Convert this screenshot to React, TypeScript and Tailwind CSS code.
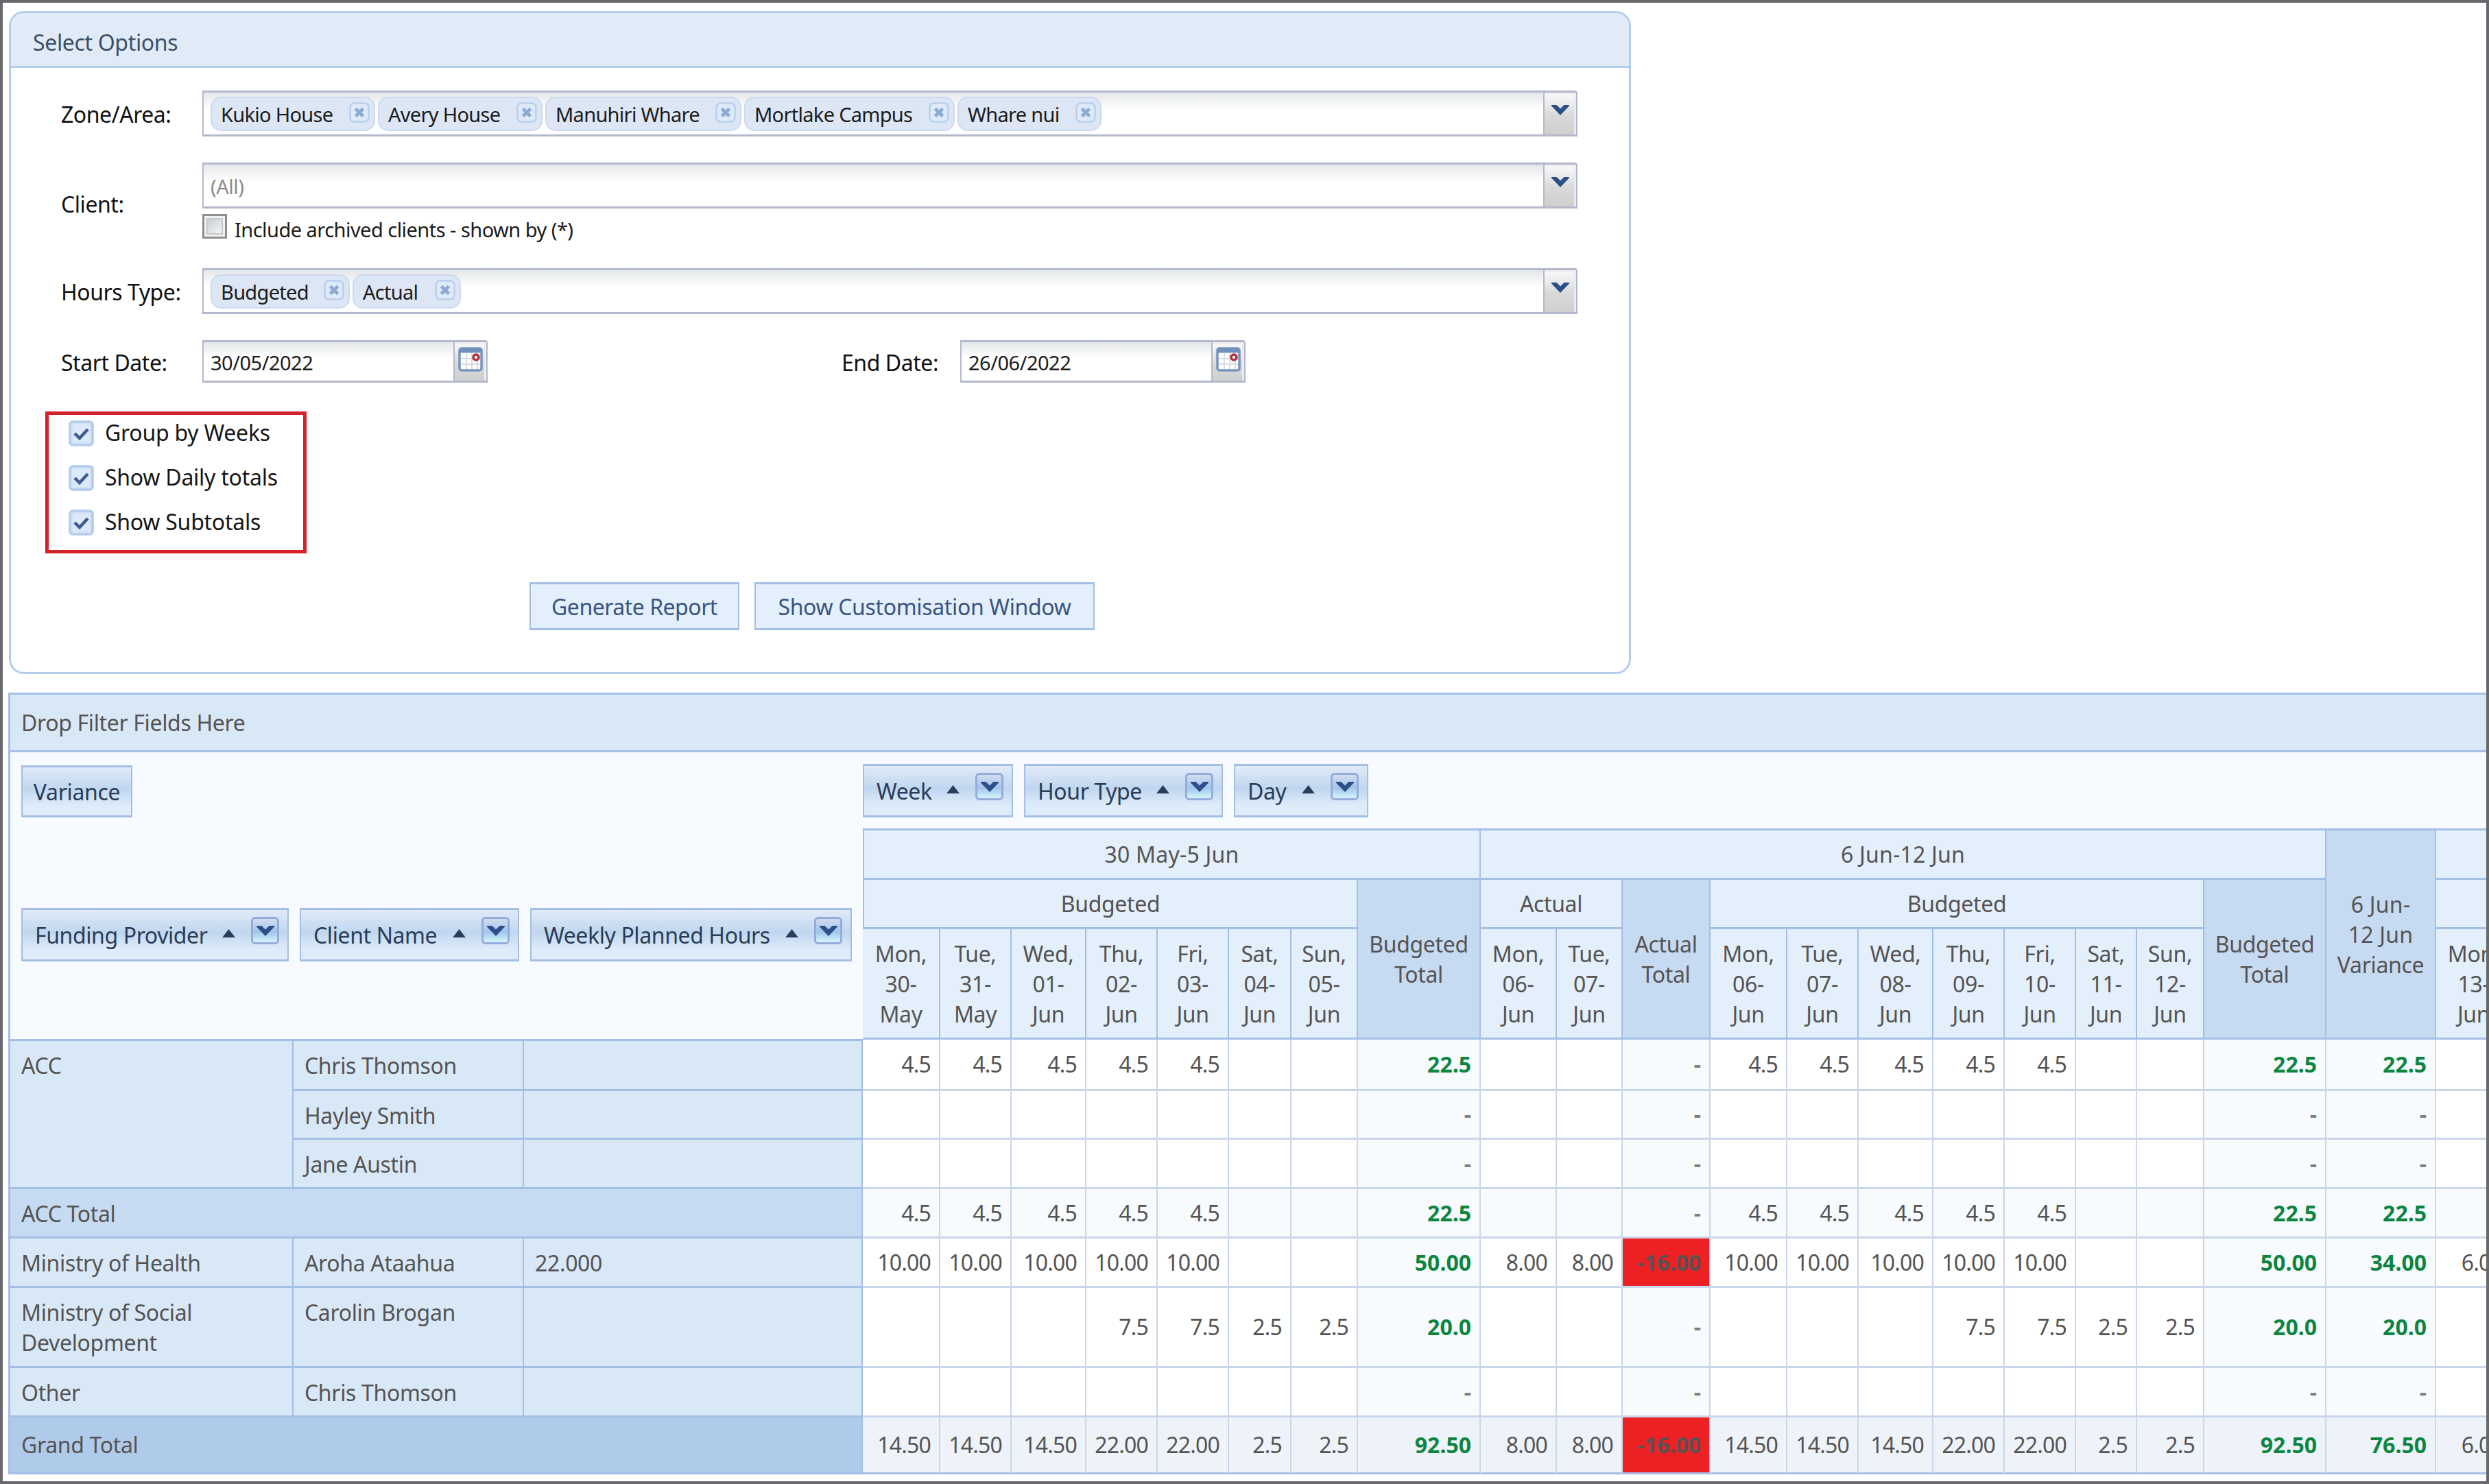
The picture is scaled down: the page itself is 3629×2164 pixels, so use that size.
import React from 'react'
import clsx from 'clsx'

type Field = { label: string; width: string }

const zones = [
  { label: 'Kukio House', width: 'w-[240px]' },
  { label: 'Avery House', width: 'w-[240px]' },
  { label: 'Manuhiri Whare', width: 'w-[286px]' },
  { label: 'Mortlake Campus', width: 'w-[307px]' },
  { label: 'Whare nui', width: 'w-[210px]' },
]

const hourTypes = [
  { label: 'Budgeted', width: 'w-[203px]' },
  { label: 'Actual', width: 'w-[158px]' },
]

const columnFields = [
  { label: 'Week', width: 'w-[219px]' },
  { label: 'Hour Type', width: 'w-[290px]' },
  { label: 'Day', width: 'w-[196px]' },
]

const rowFields = [
  { label: 'Funding Provider', width: 'w-[390px]' },
  { label: 'Client Name', width: 'w-[320px]' },
  { label: 'Weekly Planned Hours', width: 'w-[469px]' },
]

const week1 = ['Mon, 30- May', 'Tue, 31- May', 'Wed, 01- Jun', 'Thu, 02- Jun', 'Fri, 03- Jun', 'Sat, 04- Jun', 'Sun, 05- Jun']
const week2Actual = ['Mon, 06- Jun', 'Tue, 07- Jun']
const week2 = ['Mon, 06- Jun', 'Tue, 07- Jun', 'Wed, 08- Jun', 'Thu, 09- Jun', 'Fri, 10- Jun', 'Sat, 11- Jun', 'Sun, 12- Jun']

// Columns that hold a total or a variance
const totals = [7, 10, 18, 19]

const none = ['', '', '', '', '', '', '', '-', '', '', '-', '', '', '', '', '', '', '', '-', '-', '']
const acc = ['4.5', '4.5', '4.5', '4.5', '4.5', '', '', '22.5', '', '', '-', '4.5', '4.5', '4.5', '4.5', '4.5', '', '', '22.5', '22.5', '']

const rows = [
  { kind: 'client', cells: acc },
  { kind: 'client', cells: none },
  { kind: 'client', cells: none },
  { kind: 'total', cells: acc },
  {
    kind: 'client',
    cells: ['10.00', '10.00', '10.00', '10.00', '10.00', '', '', '50.00', '8.00', '8.00', '-16.00', '10.00', '10.00', '10.00', '10.00', '10.00', '', '', '50.00', '34.00', '6.00'],
  },
  {
    kind: 'client',
    cells: ['', '', '', '7.5', '7.5', '2.5', '2.5', '20.0', '', '', '-', '', '', '', '7.5', '7.5', '2.5', '2.5', '20.0', '20.0', ''],
  },
  { kind: 'client', cells: none },
  {
    kind: 'grand',
    cells: ['14.50', '14.50', '14.50', '22.00', '22.00', '2.5', '2.5', '92.50', '8.00', '8.00', '-16.00', '14.50', '14.50', '14.50', '22.00', '22.00', '2.5', '2.5', '92.50', '76.50', '6.00'],
  },
]

const columns =
  'grid-cols-[113px_104px_109px_104px_104px_91px_97px_179px_111px_96px_128px_112px_104px_109px_104px_104px_89px_98px_178px_160px_111px]'

function Tag({ label, width }: Field) {
  return (
    <div
      className={clsx(
        'flex h-[50px] shrink-0 items-center justify-between rounded-[15px] border-2 border-[#ccd9f0] bg-[#dde6f5] pr-[6px] pl-[13px]',
        width
      )}
    >
      <span className="pt-[2px] text-[29px] leading-[40px] tracking-[-0.7px] whitespace-nowrap text-[#1b1b1b]">{label}</span>
      <svg viewBox="0 0 30 30" className="mb-[3px] size-[30px] shrink-0">
        <rect x="1.5" y="1.5" width="27" height="27" rx="6" fill="#dfeaf8" stroke="#b9cfee" strokeWidth="2.5" />
        <path d="M9.5 9.5l11 11M20.5 9.5l-11 11" stroke="#8eaad3" strokeWidth="5" />
      </svg>
    </div>
  )
}

function Chevron() {
  return (
    <svg viewBox="0 0 26 15" className="h-[15px] w-[26px] shrink-0">
      <path d="M0 0h7.5L13 5.5 18.5 0H26v1.5L13 15 0 1.5z" fill="#2d4f88" />
    </svg>
  )
}

function CalendarIcon() {
  return (
    <svg viewBox="0 0 36 36" className="size-9">
      <rect x="2" y="2" width="32" height="32" rx="3" fill="#fff" stroke="#7495c0" strokeWidth="3.5" />
      <path d="M2 5.5h32" stroke="#7090bd" strokeWidth="6" />
      <path d="M12 9v23M20 9v23M28 9v23M4 17h28M4 25h28" stroke="#d9dde3" strokeWidth="2" />
      <circle cx="26" cy="15" r="4" fill="#fff" stroke="#b5303a" strokeWidth="3.5" />
    </svg>
  )
}

function Editor({ className, icon, children }: { className: string; icon: React.ReactNode; children?: React.ReactNode }) {
  return (
    <div
      className={clsx(
        'flex rounded-tr-[4px] border-x-2 border-y-[3px] border-[#b4b8cc] bg-linear-to-b from-[#e4e7e9] via-white via-40% to-white',
        className
      )}
    >
      <div className="flex flex-1 items-center gap-[4px] pl-[10px]">{children}</div>
      <div className="flex w-[48px] justify-center border-l-2 border-[#b4b8cc] bg-linear-to-b from-[#f5f5f5] from-10% via-[#d9d9d9] via-55% to-[#cfcfcf] shadow-[inset_-3px_2px_0_#ececec]">
        {icon}
      </div>
    </div>
  )
}

function ComboBox({ children }: { children: React.ReactNode }) {
  return (
    <Editor
      className="h-[67px] w-[2005px]"
      icon={
        <span className="flex pt-[18px]">
          <Chevron />
        </span>
      }
    >
      {children}
    </Editor>
  )
}

function DateEdit({ value }: { value: string }) {
  return (
    <Editor
      className="h-[62px] w-[416px]"
      icon={
        <span className="pt-[7px]">
          <CalendarIcon />
        </span>
      }
    >
      <span className="pt-[4px] text-[29px] tracking-[-0.5px] text-[#1b1b1b]">{value}</span>
    </Editor>
  )
}

function CheckOption({ label }: { label: string }) {
  return (
    <div className="flex h-[65px] items-start gap-[16px]">
      <svg viewBox="0 0 37 38" className="mt-[8px] h-[38px] w-[37px]">
        <rect x="2" y="2" width="33" height="34" rx="4" fill="#d3e3f6" stroke="#b4ccec" strokeWidth="3.5" />
        <rect x="6" y="6" width="25" height="26" fill="#dbe9f9" />
        <path d="M9 19l7 7 12-13" fill="none" stroke="#3c5c92" strokeWidth="4.5" />
      </svg>
      <span className="mt-[4px] tracking-[-0.25px] text-[#161616]">{label}</span>
    </div>
  )
}

function OptionLabel({ children }: { children: React.ReactNode }) {
  return <div className="w-[206px] shrink-0 pt-[4px] tracking-[-0.45px] text-[#111]">{children}</div>
}

function FieldHeader({ label, width }: Field) {
  return (
    <div
      className={clsx(
        'flex h-[78px] shrink-0 items-center border-x-2 border-y-[3px] border-[#a3bfe6] bg-linear-to-b from-[#e1ebf8] via-[#c0d6ef] via-45% to-[#deecfa] to-80% pr-[12px] pl-[18px] text-[#293c57]',
        width
      )}
    >
      <span className="pt-[2px] tracking-[-0.4px] whitespace-nowrap">{label}</span>
      <svg viewBox="0 0 22 14" className="mr-[22px] mb-[5px] ml-auto h-[12px] w-[21px]">
        <path d="M11 0l11 14H0z" fill="#293c5c" />
      </svg>
      <div className="mb-[12px] flex h-10 w-[41px] items-center justify-center rounded-[6px] border-[3px] border-[#97abdb] bg-linear-to-b from-[#d2dcf1] via-[#a0c5ea] via-55% to-[#d6f6ff]">
        <Chevron />
      </div>
    </div>
  )
}

function HeaderCell({ className, children }: { className?: string; children?: React.ReactNode }) {
  return (
    <div
      className={clsx(
        'flex items-center justify-center border-r-2 border-b-[3px] border-[#a3bfe6] px-[6px] pt-[2px] text-center',
        className ?? 'bg-[#e3effb]'
      )}
    >
      <div>{children}</div>
    </div>
  )
}

function DayCells({ days }: { days: string[] }) {
  return (
    <>
      {days.map((day) => (
        <HeaderCell key={day}>
          <span className="flex flex-col">
            {day.split(' ').map((part) => (
              <span key={part}>{part}</span>
            ))}
          </span>
        </HeaderCell>
      ))}
    </>
  )
}

function RowHeader({ className, children }: { className?: string; children?: React.ReactNode }) {
  return (
    <div className={clsx('border-r-2 border-b-[3px] border-[#a3bfe6] pt-[14px] pl-[16px]', className ?? 'bg-[#d8e8f7]')}>
      {children}
    </div>
  )
}

function DataCell({ value, column, kind }: { value: string; column: number; kind: string }) {
  const isTotal = totals.includes(column)
  const isNegative = value.startsWith('-') && value.length > 1

  return (
    <div
      className={clsx(
        'flex items-center justify-end border-r-2 pt-px pr-[12px]',
        kind === 'grand' ? 'border-b-[3px] border-r-[#cad6ea] border-b-[#a3bfe6]' : 'border-b-[3px] border-[#cad6ea]',
        isNegative && 'bg-[#ed2024]',
        !isNegative && kind === 'grand' && 'bg-[#eef3fa]',
        !isNegative && kind !== 'grand' && (isTotal || kind === 'total') && 'bg-[#f7fbfe]',
        isTotal ? 'font-bold tracking-normal' : 'tracking-[-0.8px]',
        isTotal && !value.startsWith('-') && 'text-[#0d8540]',
        value === '-' && 'text-[#7d8084]'
      )}
    >
      {value}
    </div>
  )
}

function SelectOptions() {
  return (
    <div className="mt-[12px] ml-[9px] h-[967px] w-[2365px] overflow-hidden rounded-[22px] border-[3px] border-[#b2cdec]">
      <div className="h-[80px] border-b-[3px] border-[#b2cdec] bg-[#e1ebf7] pt-[21px] pl-[32px] text-[#3a5068]">
        Select Options
      </div>
      <div className="flex flex-col pl-[73px]">
        <div className="mt-[33px] flex items-center">
          <OptionLabel>Zone/Area:</OptionLabel>
          <ComboBox>
            {zones.map((zone) => (
              <Tag key={zone.label} {...zone} />
            ))}
          </ComboBox>
        </div>
        <div className="mt-[38px] flex items-center">
          <OptionLabel>
            <div className="pt-[7px]">Client:</div>
          </OptionLabel>
          <div>
            <ComboBox>
              <span className="pt-[4px] text-[29px] tracking-[-0.5px] text-[#8a8a8a]">(All)</span>
            </ComboBox>
            <div className="mt-[8px] flex h-[36px] gap-[11px]">
              <div className="size-[36px] border-[3px] border-[#8f8f8f] bg-[#f1f1f1] p-[3px]">
                <div className="size-full border-2 border-[#c5c8cc] bg-linear-to-br from-[#c9cdd3] to-[#f5f5f5]" />
              </div>
              <span className="mt-px text-[29px] tracking-[-0.53px] whitespace-nowrap text-[#1b1b1b]">
                Include archived clients - shown by (*)
              </span>
            </div>
          </div>
        </div>
        <div className="mt-[43px] flex items-center">
          <OptionLabel>Hours Type:</OptionLabel>
          <ComboBox>
            {hourTypes.map((type) => (
              <Tag key={type.label} {...type} />
            ))}
          </ComboBox>
        </div>
        <div className="mt-[38px] flex items-center">
          <OptionLabel>Start Date:</OptionLabel>
          <DateEdit value="30/05/2022" />
          <div className="w-[516px]" />
          <div className="w-[173px] pt-[4px] tracking-[-0.45px] text-[#111]">End Date:</div>
          <DateEdit value="26/06/2022" />
        </div>
      </div>
      <div className="mt-[42px] ml-[50px] h-[207px] w-[381px] border-[5px] border-[#d32229] pl-[29px]">
        <CheckOption label="Group by Weeks" />
        <CheckOption label="Show Daily totals" />
        <CheckOption label="Show Subtotals" />
      </div>
      <div className="mt-[42px] ml-[756px] flex gap-[22px] text-[#3b5482]">
        <button className="h-[70px] w-[306px] border-x-2 border-y-[3px] border-[#a3bfe6] bg-[#e3effb] pt-[2px] tracking-[-0.5px]">
          Generate Report
        </button>
        <button className="h-[70px] w-[496px] border-x-2 border-y-[3px] border-[#a3bfe6] bg-[#e3effb] pt-[2px]">
          Show Customisation Window
        </button>
      </div>
    </div>
  )
}

function PivotRowHeaders() {
  return (
    <div className="grid grid-cols-[413px_336px_494px] grid-rows-[73px_71px_72px_72px_72px_117px_72px_83px] border-t-[3px] border-[#a3bfe6]">
      <RowHeader className="row-span-3 bg-[#d8e8f7]">ACC</RowHeader>
      <RowHeader>Chris Thomson</RowHeader>
      <RowHeader />
      <RowHeader>Hayley Smith</RowHeader>
      <RowHeader />
      <RowHeader>Jane Austin</RowHeader>
      <RowHeader />
      <RowHeader className="col-span-3 bg-[#c6daf1]">ACC Total</RowHeader>
      <RowHeader>Ministry of Health</RowHeader>
      <RowHeader>Aroha Ataahua</RowHeader>
      <RowHeader>22.000</RowHeader>
      <RowHeader>
        Ministry of Social
        <br />
        Development
      </RowHeader>
      <RowHeader>Carolin Brogan</RowHeader>
      <RowHeader />
      <RowHeader>Other</RowHeader>
      <RowHeader>Chris Thomson</RowHeader>
      <RowHeader />
      <RowHeader className="col-span-3 flex items-center bg-[#b0cbea] pb-[13px]">Grand Total</RowHeader>
    </div>
  )
}

function PivotColumnHeaders() {
  return (
    <div className={clsx('grid grid-rows-[72px_72px_161px] border-t-[3px] border-[#a3bfe6]', columns)}>
      <HeaderCell className="col-span-8 border-l-2 bg-[#e3effb] tracking-[0.2px]">30 May-5 Jun</HeaderCell>
      <HeaderCell className="col-span-11 bg-[#e3effb] tracking-[0.2px]">6 Jun-12 Jun</HeaderCell>
      <HeaderCell className="row-span-3 bg-[#c6daf1]">
        <span className="tracking-[0.2px]">6 Jun-</span>
        <br />
        <span className="tracking-[0.2px]">12 Jun</span>
        <br />
        Variance
      </HeaderCell>
      <HeaderCell />
      <HeaderCell className="col-span-7 border-l-2 bg-[#e3effb]">Budgeted</HeaderCell>
      <HeaderCell className="row-span-2 bg-[#c6daf1]">
        Budgeted
        <br />
        Total
      </HeaderCell>
      <HeaderCell className="col-span-2 bg-[#e3effb]">Actual</HeaderCell>
      <HeaderCell className="row-span-2 bg-[#c6daf1]">
        Actual
        <br />
        Total
      </HeaderCell>
      <HeaderCell className="col-span-7 bg-[#e3effb]">Budgeted</HeaderCell>
      <HeaderCell className="row-span-2 bg-[#c6daf1]">
        Budgeted
        <br />
        Total
      </HeaderCell>
      <HeaderCell />
      <DayCells days={week1} />
      <DayCells days={week2Actual} />
      <DayCells days={week2} />
      <DayCells days={['Mon, 13- Jun']} />
    </div>
  )
}

function PivotGrid() {
  return (
    <div className="mt-[27px] ml-[8px] w-[3700px] border-t-[3px] border-l-[3px] border-[#a3bfe6] text-[#555353]">
      <div className="h-[84px] border-b-[3px] border-[#a3bfe6] bg-[#d8e8f7] pt-[19px] pl-[16px]">Drop Filter Fields Here</div>
      <div className="flex">
        <div className="w-[1243px] shrink-0">
          <div className="h-[418px] bg-[#f7fbff] pt-[19px] pl-[16px]">
            <div className="flex h-[76px] w-[162px] items-center justify-center border-x-2 border-y-[3px] border-[#a3bfe6] bg-linear-to-b from-[#e1ebf8] via-[#c0d6ef] via-45% to-[#deecfa] to-80% pt-[2px] text-[#293c57]">
              Variance
            </div>
            <div className="mt-[132px] flex gap-[16px]">
              {rowFields.map((field) => (
                <FieldHeader key={field.label} {...field} />
              ))}
            </div>
          </div>
          <PivotRowHeaders />
        </div>
        <div>
          <div className="bg-[#f7fbff] pt-[17px]">
            <div className="mb-[16px] flex gap-[16px]">
              {columnFields.map((field) => (
                <FieldHeader key={field.label} {...field} />
              ))}
            </div>
            <PivotColumnHeaders />
          </div>
          <div className={clsx('grid grid-rows-[75px_71px_72px_72px_72px_117px_72px_83px]', columns)}>
            {rows.map((row, r) =>
              row.cells.map((value, c) => <DataCell key={`${r}-${c}`} value={value} column={c} kind={row.kind} />)
            )}
          </div>
        </div>
      </div>
    </div>
  )
}

export default function App() {
  return (
    <div className="flex h-[2164px] w-[3629px] flex-col overflow-hidden border-4 border-[#67686c] bg-white font-['Noto_Sans',sans-serif] text-[32px] leading-[44.3px] tracking-[-0.35px]">
      <SelectOptions />
      <PivotGrid />
    </div>
  )
}
